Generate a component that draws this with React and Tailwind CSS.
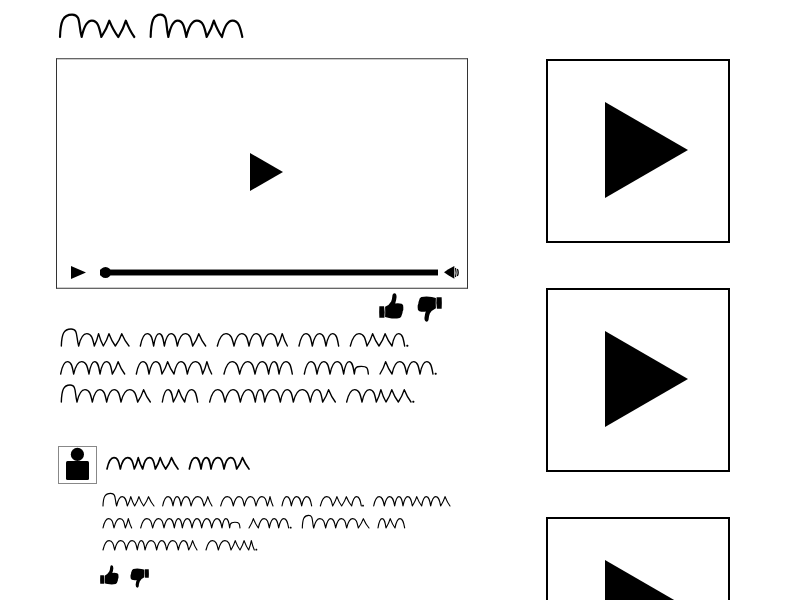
import React from "react";

const TITLE = "30 A95 m154 v205 v253 302 A355 m409 m470 v516 m577";

const DESCRIPTION = [
  "34 A86 m133 v160 v196 v237 271 m311 m343 m382 m428 v467 502 m552 m597 m638 m683 v712 747 m787 m828 m866 901 m951 v987 v1026 m1064 .1072",
  "32 m71 m117 m150 m187 v224 259 m297 m336 v372 m412 m458 v485 522 m569 m615 m656 m687 m727 763 m801 m840 m881 m913 o955 990 v1026 m1070 m1110 m1149 .1157",
  "34 A81 m127 m170 m213 m263 v301 337 m370 v404 m443 479 m525 m571 m616 m644 m691 m730 m781 m818 v856 890 m936 m979 v1008 v1045 v1083 .1090",
];

const AUTHOR = "171 m211 m253 v278 m316 v347 v384 418 m453 m483 m522 m560 v597";

const COMMENT = [
  "24 A65 m97 v119 v146 v177 203 m234 m258 m288 m327 v351 377 m415 m448 m483 m517 v534 561 m589 m620 m650 676 m713 v740 v770 m799 .804 836 m868 m899 m924 m952 v980 m1007 m1037 v1065",
  "24 m57 m91 v110 137 m173 m207 m238 m262 m291 m320 m350 m381 m404 o435 462 v490 m523 m551 m581 .587 622 A656 m692 m722 m755 m790 v822 849 m873 v900 m929",
  "24 m59 m94 m127 m150 m185 m215 m250 m281 v306 333 m370 m408 v435 v461 v478 .484",
];

// Letters: A = tall loop, m = round hump, v = sharp peak, o = low hump, . = full stop.
function penPath(strokes, rise, cap) {
  let x = 0;
  return strokes
    .split(" ")
    .map((token) => {
      const kind = token[0];
      if (kind >= "0" && kind <= "9") {
        x = Number(token);
        return `M${x} 0`;
      }
      const end = Number(token.slice(1));
      if (kind === ".") return `M${end - 1} 0h2v-2h-2z`;
      const w = end - x;
      const at = (f) => x + f * w;
      let d;
      if (kind === "v") {
        d = `Q${at(0.32)} ${-rise * 0.5} ${at(0.47)} ${-rise}Q${at(0.7)} ${-rise * 0.4} ${end} 0`;
      } else if (kind === "A") {
        d = `C${at(0.02)} ${-cap * 0.7} ${at(0.14)} ${-cap} ${at(0.56)} ${-cap}C${at(0.98)} ${-cap} ${at(0.84)} ${-cap * 0.55} ${end} 0`;
      } else if (kind === "o") {
        const low = rise * 0.62;
        d = `L${at(0.06)} ${-rise * 0.4}C${at(0.16)} ${-low} ${at(0.28)} ${-low} ${at(0.5)} ${-low}C${at(0.92)} ${-low} ${at(0.96)} ${-low * 0.8} ${end} 0`;
      } else {
        d = `C${at(0.12)} ${-rise * 0.66} ${at(0.26)} ${-rise} ${at(0.52)} ${-rise}C${at(0.84)} ${-rise} ${at(0.9)} ${-rise * 0.55} ${end} 0`;
      }
      x = end;
      return d;
    })
    .join("");
}

function Scribble({ strokes, left, width, height, rise, cap = rise, pen, label }) {
  return (
    <svg
      role="img"
      aria-label={label}
      className="block shrink-0"
      width={width}
      height={height}
      viewBox={`${left} ${-3 * (height - 2)} ${3 * width} ${3 * height}`}
      fill="none"
      stroke="#000"
      strokeWidth={pen}
      strokeLinejoin="round"
      strokeLinecap="round"
    >
      <path d={penPath(strokes, rise, cap)} />
    </svg>
  );
}

function Thumb({ className }) {
  return (
    <svg viewBox="0 0 74 77" className={className} aria-hidden="true">
      <path d="M1 39H15Q18 56 16 73H1Q0 56 1 39Z" />
      <path d="M18 41Q31 35 36 25Q39 18 40 6Q41 1 46 1Q52 2 52 12Q51 23 48 31Q58 29 67 32Q73 35 72 42Q73 50 70 55Q70 60 68 64Q67 71 61 74Q46 77 30 74Q24 73 18 71Q19 56 18 41Z" />
    </svg>
  );
}

function Votes({ small = false, className }) {
  const size = small ? "block h-5 w-[19px]" : "block h-[26px] w-[25px]";
  return (
    <div className={`flex items-start ${className}`}>
      <button type="button" aria-label="Like">
        <Thumb className={size} />
      </button>
      <button type="button" aria-label="Dislike" className="mt-[3px]">
        <Thumb className={`${size} rotate-180`} />
      </button>
    </div>
  );
}

function Player() {
  return (
    <section
      aria-label="Video player"
      className="mt-[19px] flex h-[231px] flex-col border border-x-[#333] border-y-[#666] shadow-[inset_0_1px_#ccc,inset_0_-1px_#ccc]"
    >
      <div className="flex flex-1 items-center justify-center pt-5 pl-2">
        <button type="button" aria-label="Play video">
          <svg className="block h-[38px] w-[33px]" viewBox="0 0 33 38">
            <path d="M0 0L33 19L0 38Z" />
          </svg>
        </button>
      </div>
      <div className="mb-2 flex h-[15px] items-center pr-2 pl-3.5">
        <button type="button" aria-label="Play">
          <svg className="block h-[13px] w-[15px]" viewBox="0 0 15 13">
            <path d="M0 0L15 6.5L0 13Z" />
          </svg>
        </button>
        <input
          type="range"
          aria-label="Seek"
          min="0"
          max="100"
          defaultValue="0"
          className="ml-3.5 block h-[11px] min-w-0 flex-1 appearance-none bg-transparent [&::-webkit-slider-runnable-track]:h-[7px] [&::-webkit-slider-runnable-track]:border-y [&::-webkit-slider-runnable-track]:border-[#888] [&::-webkit-slider-runnable-track]:bg-black [&::-webkit-slider-thumb]:-mt-[3px] [&::-webkit-slider-thumb]:size-[11px] [&::-webkit-slider-thumb]:appearance-none [&::-webkit-slider-thumb]:rounded-full [&::-webkit-slider-thumb]:bg-black"
        />
        <button type="button" aria-label="Mute" className="ml-1.5">
          <svg className="block h-[13px] w-[15px]" viewBox="0 0 45 39">
            <path d="M0 19L13 10L31 0V38L13 28Z" />
            <path d="M34.5 6Q38 19 34.5 33" fill="none" stroke="#000" strokeWidth="3.5" />
            <path d="M40 9Q45 19 40 30" fill="none" stroke="#000" strokeWidth="4" />
          </svg>
        </button>
      </div>
    </section>
  );
}

function Comment() {
  return (
    <article className="mt-[42px]">
      <header className="flex items-center gap-1 pl-0.5">
        <svg
          role="img"
          aria-label="Avatar"
          className="block h-[38px] w-[39px] border border-[#888]"
          viewBox="0 0 37 36"
        >
          <circle cx="18.4" cy="7.4" r="6.6" />
          <rect x="7" y="14" width="23" height="19" rx="1.5" />
        </svg>
        <h2 className="pb-1">
          <Scribble label="Comment author" strokes={AUTHOR} left={153} width={160} height={16} rise={34} pen={5} />
        </h2>
      </header>
      <div className="pl-11">
        <div className="mt-2 flex flex-col gap-1.5">
          {COMMENT.map((line, i) => (
            <Scribble
              key={i}
              label={`Comment line ${i + 1}`}
              strokes={line}
              left={15}
              width={356}
              height={16}
              rise={28}
              cap={38}
              pen={3.4}
            />
          ))}
        </div>
        <Votes small className="mt-[13px] gap-[11px]" />
      </div>
    </article>
  );
}

function Thumbnail() {
  return (
    <li>
      <a href="#video" aria-label="Suggested video" className="block border-2 border-black">
        <svg className="block w-full" viewBox="0 0 180 180">
          <path d="M57 41L140 89L57 137Z" />
        </svg>
      </a>
    </li>
  );
}

export default function App() {
  return (
    <div className="flex h-screen items-start gap-[78px] overflow-y-auto bg-white pr-[70px] pl-14 font-['Liberation_Sans',sans-serif] text-black [scrollbar-width:none]">
      <main className="min-w-0 flex-1 pt-3">
        <h1>
          <Scribble label="Video title" strokes={TITLE} left={18} width={200} height={27} rise={49} cap={67} pen={6.5} />
        </h1>
        <Player />
        <Votes className="mt-1 justify-end gap-[13px] pr-[26px]" />
        <div className="mt-1.5 flex flex-col gap-2">
          {DESCRIPTION.map((line, i) => (
            <Scribble
              key={i}
              label={`Description line ${i + 1}`}
              strokes={line}
              left={18}
              width={390}
              height={20}
              rise={37}
              cap={51}
              pen={4.2}
            />
          ))}
        </div>
        <Comment />
      </main>
      <aside className="w-[184px] shrink-0 pt-[59px]">
        <ul className="flex flex-col gap-[45px]">
          <Thumbnail />
          <Thumbnail />
          <Thumbnail />
        </ul>
      </aside>
    </div>
  );
}
